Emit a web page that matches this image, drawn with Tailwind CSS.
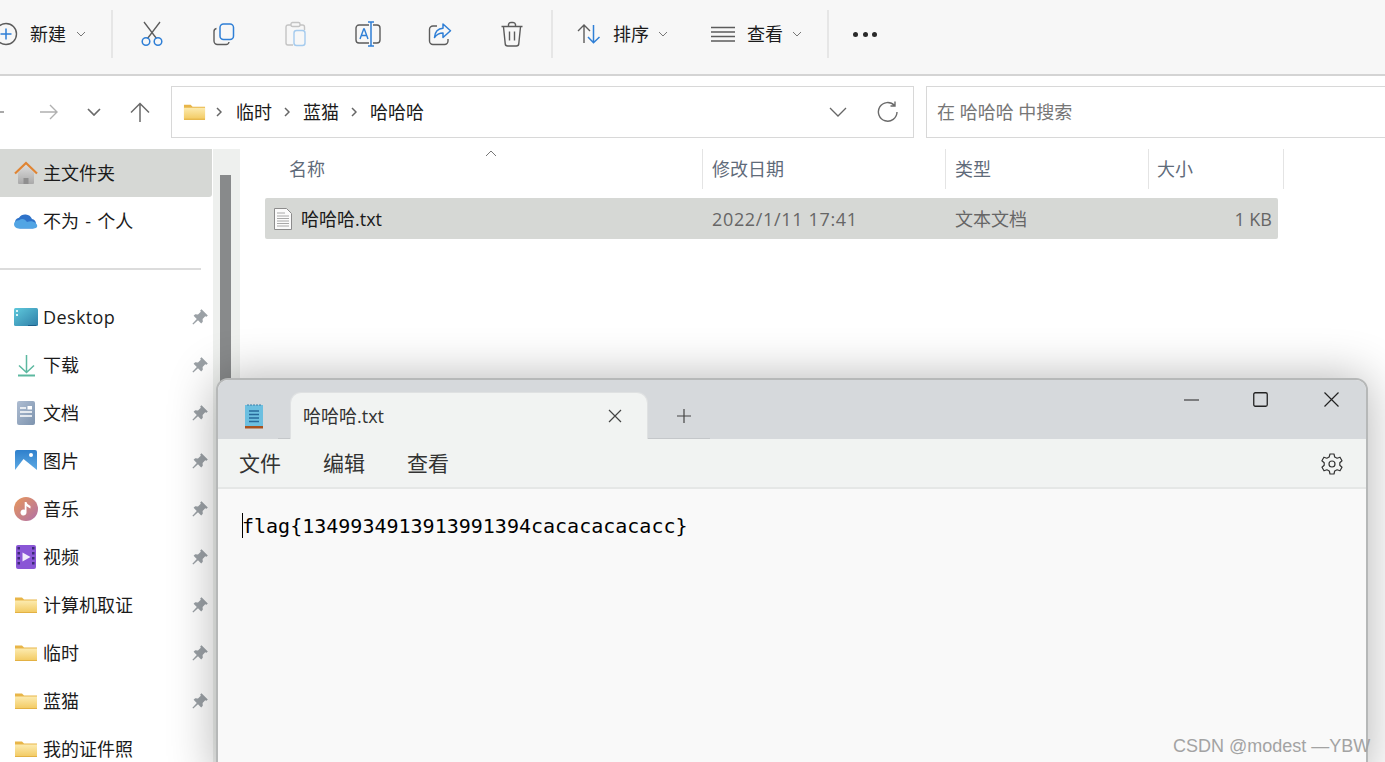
<!DOCTYPE html>
<html lang="zh-CN">
<head>
<meta charset="utf-8">
<title>哈哈哈.txt</title>
<script src="https://cdn.jsdelivr.net/npm/@tailwindcss/browser@4"></script>
</head>
<body class="bg-white">
<svg class="absolute w-0 h-0" aria-hidden="true">
  <defs>
    <linearGradient id="fg" x1="0" y1="0" x2="0" y2="1"><stop offset="0" stop-color="#fcebb0"/><stop offset="1" stop-color="#f2c95f"/></linearGradient>
    <linearGradient id="hm" x1="0" y1="0" x2="0" y2="1"><stop offset="0" stop-color="#dcdcdc"/><stop offset="1" stop-color="#a9a9a9"/></linearGradient>
    <linearGradient id="dk" x1="0" y1="0" x2="1" y2="1"><stop offset="0" stop-color="#5fc9dc"/><stop offset="1" stop-color="#2f7fa8"/></linearGradient>
    <linearGradient id="dc" x1="0" y1="0" x2="1" y2="1"><stop offset="0" stop-color="#aebdd2"/><stop offset="1" stop-color="#7d93ae"/></linearGradient>
    <linearGradient id="pc" x1="0" y1="0" x2="0" y2="1"><stop offset="0" stop-color="#2f80cc"/><stop offset="1" stop-color="#62aee6"/></linearGradient>
    <linearGradient id="mu" x1="0" y1="0" x2="1" y2="1"><stop offset="0" stop-color="#e8985a"/><stop offset="1" stop-color="#b070a8"/></linearGradient>
    <symbol id="folder" viewBox="0 0 24 18">
      <path d="M1 1.500h7l2 2h13v13.500H1z" fill="#e8b548"/>
      <path d="M1 4.500h22V16a1 1 0 0 1-1 1H2a1 1 0 0 1-1-1z" fill="url(#fg)"/>
      <path d="M1 16h22v1H1z" fill="#e3b143"/>
    </symbol>
    <symbol id="pin" viewBox="0 0 16 16">
      <path d="M9.500 .2 15.800 6.500 14.500 7.800 13.200 7.200 10.600 10 10.800 12.800 9.200 14.400 6 11.200 1.300 15.600 .4 14.700 4.800 10 1.600 6.800 3.200 5.200 6 5.400 8.800 2.800 8.200 1.500z" fill="#9ba1a6"/>
    </symbol>
    <symbol id="chev" viewBox="0 0 10 6">
      <path d="M1 1l4 4 4-4" fill="none" stroke="#777" stroke-width="1"/>
    </symbol>
  </defs>
</svg>

<div class="relative w-[1385px] h-[762px] overflow-hidden bg-white text-[18px] leading-[26px] text-[#1b1b1b] font-['Open_Sans','Noto_Sans_CJK_SC',sans-serif]">

  <!-- command bar -->
  <div class="flex items-center h-[76px] bg-[#f7f7f7] border-b-2 border-[#d4d4d4] pb-[6px]">
    <svg class="ml-[-6px] shrink-0" width="24" height="24" viewBox="0 0 24 24"><circle cx="12" cy="12" r="10.500" fill="none" stroke="#5c5c5c" stroke-width="1.400"/><path d="M12 6.500v11M6.500 12h11" stroke="#2f7fd6" stroke-width="1.500"/></svg>
    <span class="ml-[12px] w-[37px]">新建</span>
    <svg class="ml-[9px]" width="10" height="6"><use href="#chev"/></svg>
    <div class="ml-[25px] w-[2px] h-[48px] bg-[#e6e6e6]"></div>

    <div class="ml-[3px] w-[72px] flex justify-center">
      <svg width="24" height="26" viewBox="0 0 24 26"><path d="M4 1l12.500 16.500M20 1 7.500 17.500" stroke="#5c5c5c" stroke-width="1.300" fill="none"/><circle cx="6" cy="20.500" r="3.800" fill="none" stroke="#2f7fd6" stroke-width="1.500"/><circle cx="18" cy="20.500" r="3.800" fill="none" stroke="#2f7fd6" stroke-width="1.500"/></svg>
    </div>
    <div class="w-[72px] flex justify-center">
      <svg width="24" height="24" viewBox="0 0 24 24"><path d="M4.500 6.500A3 3 0 0 0 2 9.500V19a3.500 3.500 0 0 0 3.500 3.500H14a3 3 0 0 0 3-2.500" fill="none" stroke="#5c5c5c" stroke-width="1.400"/><rect x="8" y="2" width="13.500" height="15.500" rx="3.500" fill="none" stroke="#2f7fd6" stroke-width="1.500"/></svg>
    </div>
    <div class="w-[72px] flex justify-center">
      <svg width="24" height="26" viewBox="0 0 24 26"><path d="M7 4H4.500A2 2 0 0 0 2 6v16a2 2 0 0 0 2 2h5M16 4h2.500a2 2 0 0 1 2 2v3" fill="none" stroke="#c4c4c4" stroke-width="1.400"/><rect x="7" y="1.500" width="9" height="4" rx="1.500" fill="none" stroke="#c4c4c4" stroke-width="1.400"/><rect x="10" y="9.500" width="11" height="15" rx="2.500" fill="none" stroke="#a5cbee" stroke-width="1.400"/></svg>
    </div>
    <div class="w-[72px] flex justify-center">
      <svg width="26" height="26" viewBox="0 0 26 26"><path d="M14 4H4a3 3 0 0 0-3 3v12a3 3 0 0 0 3 3h10M18 4h4a3 3 0 0 1 3 3v12a3 3 0 0 1-3 3h-4" fill="none" stroke="#5c5c5c" stroke-width="1.400"/><path d="M5 18l3.700-10h.6L13 18M6.300 14.500h5.400" fill="none" stroke="#2f7fd6" stroke-width="1.400"/><path d="M16 1v24M13 1h6M13 25h6" fill="none" stroke="#2f7fd6" stroke-width="1.500"/></svg>
    </div>
    <div class="w-[72px] flex justify-center">
      <svg width="24" height="24" viewBox="0 0 24 24"><path d="M9 4H5a3.500 3.500 0 0 0-3.500 3.500V19A3.500 3.500 0 0 0 5 22.500h11.500A3.500 3.500 0 0 0 20 19v-2" fill="none" stroke="#5c5c5c" stroke-width="1.400"/><path d="M15 2v4.300C10 6.500 7 9.500 6.500 15.500 9 12 11.500 11 15 11v4.500l7.500-6.700z" fill="none" stroke="#2f7fd6" stroke-width="1.500" stroke-linejoin="round"/></svg>
    </div>
    <div class="w-[72px] flex justify-center">
      <svg width="24" height="26" viewBox="0 0 24 26"><path d="M1.500 5.500h21M8.500 5V3.500a2.500 2.500 0 0 1 2.500-2h2a2.500 2.500 0 0 1 2.500 2V5M3.500 6l1.700 16.500a2.500 2.500 0 0 0 2.500 2.500h8.600a2.500 2.500 0 0 0 2.500-2.500L20.500 6M9.500 10.500v9M14.500 10.500v9" fill="none" stroke="#5c5c5c" stroke-width="1.400"/></svg>
    </div>
    <div class="ml-[3px] w-[2px] h-[48px] bg-[#e6e6e6]"></div>

    <svg class="ml-[24px]" width="24" height="20" viewBox="0 0 24 20"><path d="M7 19V1.500M1 7l6-6 6 6" fill="none" stroke="#5c5c5c" stroke-width="1.400"/><path d="M16.500 1v17.500M11 13l5.500 5.800L22.500 13" fill="none" stroke="#2f7fd6" stroke-width="1.500"/></svg>
    <span class="ml-[12px] w-[37px]">排序</span>
    <svg class="ml-[8px]" width="10" height="6"><use href="#chev"/></svg>
    <svg class="ml-[43px]" width="24" height="16" viewBox="0 0 24 16"><path d="M0 1.500h24M0 6h24M0 10.500h24M0 15h24" stroke="#5c5c5c" stroke-width="1.300"/></svg>
    <span class="ml-[12px] w-[37px]">查看</span>
    <svg class="ml-[8px]" width="10" height="6"><use href="#chev"/></svg>
    <div class="ml-[25px] w-[2px] h-[48px] bg-[#e6e6e6]"></div>
    <div class="ml-[24px] w-[24px] flex justify-between">
      <span class="w-[5px] h-[5px] rounded-full bg-[#2a2a2a]"></span>
      <span class="w-[5px] h-[5px] rounded-full bg-[#2a2a2a]"></span>
      <span class="w-[5px] h-[5px] rounded-full bg-[#2a2a2a]"></span>
    </div>
  </div>

  <!-- address row -->
  <div class="flex items-center h-[73px] pb-[2px] bg-white">
    <svg class="ml-[-14px]" width="18" height="18" viewBox="0 0 18 18"><path d="M1 9h17M8 2 1 9l7 7" fill="none" stroke="#8d8d8d" stroke-width="1.400"/></svg>
    <svg class="ml-[36px]" width="18" height="18" viewBox="0 0 18 18"><path d="M0 9h17M10 2l7 7-7 7" fill="none" stroke="#b0b0b0" stroke-width="1.400"/></svg>
    <svg class="ml-[29px]" width="14" height="8" viewBox="0 0 14 8"><path d="M1 1l6 6 6-6" fill="none" stroke="#6a6a6a" stroke-width="1.700"/></svg>
    <svg class="ml-[29px]" width="20" height="20" viewBox="0 0 20 20"><path d="M10 20V1.500M1 10.500l9-9 9 9" fill="none" stroke="#6a6a6a" stroke-width="1.500"/></svg>
    <div class="ml-[21px] w-[743px] h-[52px] shrink-0 border-[1.500px] border-[#d8d8d8] flex items-center pl-[11px]">
      <svg width="23" height="18"><use href="#folder"/></svg>
      <svg class="ml-[10px]" width="6" height="10" viewBox="0 0 6 10"><path d="M1 1l4 4-4 4" fill="none" stroke="#666" stroke-width="1.500"/></svg>
      <span class="ml-[14px] w-[36px]">临时</span>
      <svg class="ml-[12px]" width="6" height="10" viewBox="0 0 6 10"><path d="M1 1l4 4-4 4" fill="none" stroke="#666" stroke-width="1.500"/></svg>
      <span class="ml-[13px] w-[36px]">蓝猫</span>
      <svg class="ml-[12px]" width="6" height="10" viewBox="0 0 6 10"><path d="M1 1l4 4-4 4" fill="none" stroke="#666" stroke-width="1.500"/></svg>
      <span class="ml-[13px]">哈哈哈</span>
      <svg class="ml-auto mr-[-1px]" width="18" height="10" viewBox="0 0 18 10"><path d="M1 1l8 8 8-8" fill="none" stroke="#666" stroke-width="1.300"/></svg>
      <svg class="ml-[31px] mr-[14px]" width="22" height="22" viewBox="0 0 22 22"><path d="M17.500 4.500A9.300 9.300 0 1 0 20 11M18 .5v4.500h-4.500" fill="none" stroke="#6a6a6a" stroke-width="1.400"/></svg>
    </div>
    <div class="ml-[12px] flex-1 h-[52px] border-[1.500px] border-r-0 border-[#d8d8d8] flex items-center pl-[10px] text-[#767676]">在 哈哈哈 中搜索</div>
  </div>

  <!-- body -->
  <div class="flex h-[613px]">
    <!-- nav pane -->
    <nav class="w-[213px] shrink-0">
      <div class="h-[48px] w-[212px] bg-[#d6d8d5] rounded-br-[3px] flex items-center pl-[14px] gap-[5px]">
        <svg width="24" height="24" viewBox="0 0 24 24"><path d="M4 11.500 12 4l8 7.500V22a1 1 0 0 1-1 1H5a1 1 0 0 1-1-1z" fill="url(#hm)"/><path d="M9.500 23v-6h5v6z" fill="#8f8f8f"/><path d="M1 12.500 12 2l11 10.500" fill="none" stroke="#e08433" stroke-width="2.200"/></svg>
        <span>主文件夹</span>
      </div>
      <div class="h-[48px] flex items-center pl-[14px] gap-[5px]">
        <svg width="24" height="16" viewBox="0 0 24 16"><path d="M6 15.500a5.500 5.500 0 0 1-1-10.800A7.500 7.500 0 0 1 18 6a5 5 0 0 1 1 9.500z" fill="#2f73c9"/><path d="M5 15.500c-3 0-5-2-5-4.300C0 9 2 7 5 7.200 8 5 11 6 13 9c3-1 6-1 8.500 1 3 2.500 2 5.500-2 5.500z" fill="#52a5e4"/></svg>
        <span class="[word-spacing:1.500px]">不为 - 个人</span>
      </div>
      <div class="h-[48px] flex items-center"><div class="w-[201px] h-[2px] bg-[#dcdcdc]"></div></div>

      <div class="h-[48px] flex items-center pl-[14px] gap-[5px]">
        <svg width="24" height="18" viewBox="0 0 24 18"><rect width="24" height="18" rx="1.500" fill="url(#dk)"/><path d="M2 2h2v2H2zM2 6h2v2H2z" fill="#d8f4f8"/><path d="M14 17h8v1h-8z" fill="#1c5f8a"/></svg>
        <span class="flex-1 tracking-[0.4px]">Desktop</span>
        <svg class="mr-[5px]" width="16" height="16"><use href="#pin"/></svg>
      </div>
      <div class="h-[48px] flex items-center pl-[14px] gap-[5px]">
        <svg width="24" height="24" viewBox="0 0 24 24"><path d="M12.500 2v17M5 12.500l7.500 7 7.500-7" fill="none" stroke="#5cb8a0" stroke-width="1.500"/><path d="M4 22.500h17" stroke="#5cb8a0" stroke-width="2"/></svg>
        <span class="flex-1">下载</span>
        <svg class="mr-[5px]" width="16" height="16"><use href="#pin"/></svg>
      </div>
      <div class="h-[48px] flex items-center pl-[14px] gap-[5px]">
        <svg width="24" height="24" viewBox="0 0 24 24"><rect x="3" y="0" width="18" height="24" rx="2" fill="url(#dc)"/><path d="M6 7h6M6 11h12M6 15h12" stroke="#fff" stroke-width="1.300"/><rect x="13.500" y="5" width="4.500" height="3.500" fill="#fff"/></svg>
        <span class="flex-1">文档</span>
        <svg class="mr-[5px]" width="16" height="16"><use href="#pin"/></svg>
      </div>
      <div class="h-[48px] flex items-center pl-[14px] gap-[5px]">
        <svg width="24" height="22" viewBox="0 0 24 22"><rect x="1" y="0" width="22" height="22" rx="2" fill="url(#pc)"/><circle cx="17" cy="5" r="2" fill="#fff"/><path d="M1 20 9.500 9 23 20v2H1z" fill="#fff"/></svg>
        <span class="flex-1">图片</span>
        <svg class="mr-[5px]" width="16" height="16"><use href="#pin"/></svg>
      </div>
      <div class="h-[48px] flex items-center pl-[14px] gap-[5px]">
        <svg width="24" height="24" viewBox="0 0 24 24"><circle cx="12" cy="12" r="12" fill="url(#mu)"/><path d="M12.500 5v10.500a3 3 0 1 1-1.800-2.700V5zM12.500 5c.5 2.500 2.500 3 4 4v2.500c-1.500-.8-3-1.500-4-2.500z" fill="#fff"/></svg>
        <span class="flex-1">音乐</span>
        <svg class="mr-[5px]" width="16" height="16"><use href="#pin"/></svg>
      </div>
      <div class="h-[48px] flex items-center pl-[14px] gap-[5px]">
        <svg width="24" height="24" viewBox="0 0 24 24"><rect x="2" y="0" width="20" height="24" rx="2" fill="#8a56d6"/><path d="M3.500 2h2.500v2.500H3.500zM3.500 7h2.500v2.500H3.500zM3.500 12h2.500v2.500H3.500zM3.500 17h2.500v2.500H3.500zM18 2h2.500v2.500H18zM18 7h2.500v2.500H18zM18 12h2.500v2.500H18zM18 17h2.500v2.500H18z" fill="#3d2a78"/><path d="M8.500 7.500 16.500 12l-8 4.500z" fill="#f1eafc"/></svg>
        <span class="flex-1">视频</span>
        <svg class="mr-[5px]" width="16" height="16"><use href="#pin"/></svg>
      </div>
      <div class="h-[48px] flex items-center pl-[14px] gap-[5px]">
        <svg width="24" height="18"><use href="#folder"/></svg>
        <span class="flex-1">计算机取证</span>
        <svg class="mr-[5px]" width="16" height="16"><use href="#pin"/></svg>
      </div>
      <div class="h-[48px] flex items-center pl-[14px] gap-[5px]">
        <svg width="24" height="18"><use href="#folder"/></svg>
        <span class="flex-1">临时</span>
        <svg class="mr-[5px]" width="16" height="16"><use href="#pin"/></svg>
      </div>
      <div class="h-[48px] flex items-center pl-[14px] gap-[5px]">
        <svg width="24" height="18"><use href="#folder"/></svg>
        <span class="flex-1">蓝猫</span>
        <svg class="mr-[5px]" width="16" height="16"><use href="#pin"/></svg>
      </div>
      <div class="h-[48px] flex items-center pl-[14px] gap-[5px]">
        <svg width="24" height="18"><use href="#folder"/></svg>
        <span class="flex-1">我的证件照</span>
      </div>
    </nav>

    <!-- scrollbar -->
    <div class="w-[27px] shrink-0 bg-[#eef0ee] pl-[7px] pt-[26px]">
      <div class="w-[11px] h-[400px] bg-[#888a8b]"></div>
    </div>

    <!-- file list -->
    <section class="flex-1 pl-[25px]">
      <div class="flex h-[49px] text-[#5f6b7a] pb-[9px]">
        <div class="relative w-[438px] border-r-[1.500px] border-[#e4e4e4] pl-[24px] flex items-center">
          名称
          <svg class="absolute left-[220px] top-[1px]" width="12" height="7" viewBox="0 0 12 7"><path d="M1 6l5-5 5 5" fill="none" stroke="#777" stroke-width="1"/></svg>
        </div>
        <div class="w-[243px] border-r-[1.500px] border-[#e4e4e4] pl-[9px] flex items-center">修改日期</div>
        <div class="w-[203px] border-r-[1.500px] border-[#e4e4e4] pl-[9px] flex items-center">类型</div>
        <div class="w-[135px] border-r-[1.500px] border-[#e4e4e4] pl-[8px] flex items-center">大小</div>
      </div>
      <div class="flex items-center w-[1013px] h-[41px] bg-[#d6d8d5] rounded-[2px]">
        <div class="w-[438px] flex items-center pl-[9px] gap-[9px]">
          <svg width="18" height="22" viewBox="0 0 18 22"><path d="M.5.500h12l5 5v16H.5z" fill="#fbfbfb" stroke="#8c8c8c"/><path d="M3 5h8M3 8h12M3 10.500h12M3 13h12M3 15.500h12M3 18h12" stroke="#a8a8a8"/></svg>
          <span>哈哈哈.txt</span>
        </div>
        <div class="w-[243px] pl-[9px] text-[#666] tracking-[0.66px]">2022/1/11 17:41</div>
        <div class="w-[204px] pl-[9px] text-[#666]">文本文档</div>
        <div class="w-[122px] text-right text-[#666]">1 KB</div>
      </div>
    </section>
  </div>

  <!-- notepad window -->
  <div class="absolute left-[216px] top-[378px] w-[1152px] h-[400px] rounded-t-[12px] border-2 border-[#b6b8b8] bg-[#f9f9f9] shadow-[0_0_48px_rgba(0,0,0,0.3)] overflow-hidden">
    <div class="flex h-[59px] bg-[#d6d9dc]">
      <div class="w-[72px] flex justify-center items-start pt-[23px] relative">
        <svg width="20" height="26" viewBox="0 0 20 26"><path d="M1 2h18v21H1z" fill="#6cbfe0"/><path d="M4 1v2M7 1v2M10 1v2M13 1v2M16 1v2" stroke="#3a7ea8" stroke-width="1"/><path d="M5 8h10M5 11.500h10M5 15h10M5 18.500h10" stroke="#27699a" stroke-width="1.600"/><path d="M1 23h18v2.500H1z" fill="#a8521f"/></svg>
        <span class="absolute right-0 bottom-0 w-[12px] h-[1px] bg-[#c4c7ca]"></span>
      </div>
      <div class="mt-[12px] w-[358px] h-[47px] bg-[#f1f3f2] rounded-t-[11px] border-t-[1px] border-x-[1px] border-[#dfe1e2] flex items-center pl-[12px] pb-[1px] text-[#333]">
        <span class="flex-1">哈哈哈.txt</span>
        <svg class="mr-[25px]" width="14" height="14" viewBox="0 0 14 14"><path d="M1 1l12 12M13 1 1 13" stroke="#444" stroke-width="1.200"/></svg>
      </div>
      <div class="w-[62px] pl-[29px] pt-[29px] border-b border-[#c4c7ca]">
        <svg width="14" height="14" viewBox="0 0 14 14"><path d="M7 0v14M0 7h14" stroke="#444" stroke-width="1.200"/></svg>
      </div>
      <div class="ml-auto flex items-start pt-[12px] pr-[27px]">
        <svg class="mt-[7px] mr-[1px]" width="15" height="2"><path d="M0 1h15" stroke="#222" stroke-width="1.100"/></svg>
        <svg class="ml-[53px]" width="15" height="15" viewBox="0 0 15 15"><rect x=".75" y=".75" width="13.500" height="13.500" rx="1.500" fill="none" stroke="#222" stroke-width="1.300"/></svg>
        <svg class="ml-[56px]" width="15" height="15" viewBox="0 0 15 15"><path d="M.5.500l14 14M14.500.500l-14 14" stroke="#222" stroke-width="1.200"/></svg>
      </div>
    </div>
    <div class="flex items-center h-[50px] bg-[#f1f3f2] border-b-2 border-[#e5e7e6] pl-[21px] text-[21px] text-[#333]">
      <span class="w-[42px]">文件</span>
      <span class="ml-[42px] w-[42px]">编辑</span>
      <span class="ml-[42px] w-[42px]">查看</span>
      <svg class="ml-auto mr-[22px] mt-[1px]" width="24" height="24" viewBox="0 0 24 24"><path d="M10 2h4l.7 3 2.400 1.200 2.900-1 2 3.500-2.200 2.100v2.400l2.200 2.100-2 3.500-2.900-1-2.400 1.200-.7 3h-4l-.7-3-2.400-1.200-2.900 1-2-3.500 2.200-2.100v-2.400L1.900 8.700l2-3.500 2.900 1 2.400-1.200z" fill="none" stroke="#333" stroke-width="1.200" stroke-linejoin="round"/><circle cx="12" cy="12" r="3" fill="none" stroke="#333" stroke-width="1.200"/></svg>
    </div>
    <div class="relative pt-[22px] pl-[24px] font-['DejaVu_Sans_Mono',monospace] text-[20px] leading-[30px] text-black">
      <span class="absolute left-[24px] top-[24px] w-[1px] h-[25px] bg-black"></span>
      flag{1349934913913991394cacacacacacc}
    </div>
  </div>

  <!-- watermark -->
  <div class="absolute left-[1173px] top-[733px] text-[#a3a3a3] text-[18px] whitespace-nowrap font-['Liberation_Sans','Noto_Sans_CJK_SC',sans-serif]">CSDN @modest —YBW</div>
</div>
</body>
</html>
